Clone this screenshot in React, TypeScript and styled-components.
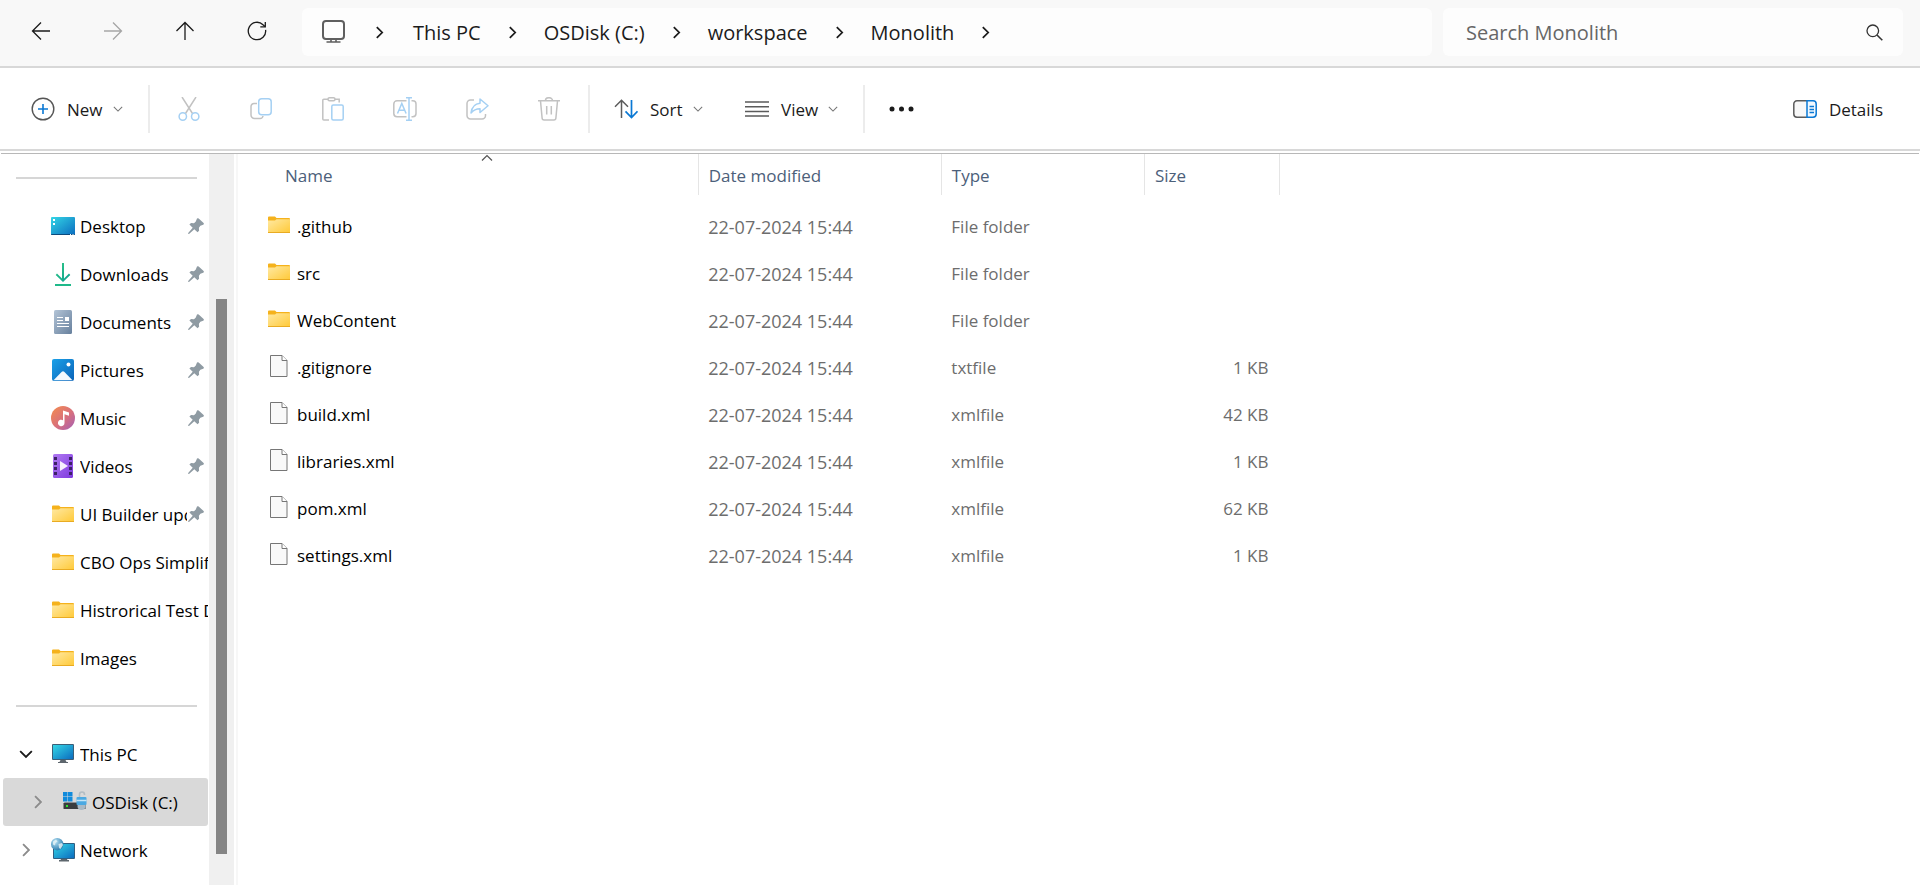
import React from "react";
import styled, { createGlobalStyle } from "styled-components";

const GlobalStyle = createGlobalStyle`
  *, *::before, *::after { box-sizing: border-box; }
  body {
    margin: 0;
    background: #ffffff;
    color: #000000;
    font-family: "Segoe UI", "Open Sans", "Noto Sans", sans-serif;
    font-size: 17px;
    line-height: 24px;
  }
  button, input {
    font: inherit;
    color: inherit;
    background: none;
    border: 0;
    padding: 0;
    margin: 0;
  }
  svg { display: block; flex: none; }
`;

/* ---------- layout ---------- */

const Window = styled.div`
  display: flex;
  flex-direction: column;
  min-height: 100vh;
`;

const AddressRow = styled.header`
  display: flex;
  align-items: center;
  height: 68px;
  padding: 0 17px 4px 5px;
  background: #f8f8f8;
  border-bottom: 2px solid #d8d8d8;
`;

const NavButtons = styled.div`
  display: flex;
  flex: none;
  margin-right: 9px;
`;

const NavButton = styled.button`
  display: flex;
  align-items: center;
  justify-content: center;
  width: 72px;
  height: 48px;
`;

const Breadcrumbs = styled.nav`
  flex: 1;
  display: flex;
  align-items: center;
  min-width: 0;
  height: 48px;
  margin-top: 2px;
  padding-left: 20px;
  overflow: hidden;
  background: #fdfdfd;
  border-radius: 6px;
`;

const Crumb = styled.button`
  padding-top: 2px;
  color: #1b1b1b;
  font-size: 20px;
  line-height: 28px;
  white-space: nowrap;
`;

const CrumbArrow = styled.span<{ $wide?: boolean }>`
  display: flex;
  flex: none;
  align-items: center;
  justify-content: center;
  width: ${(p) => (p.$wide ? 68 : 63)}px;
  padding-top: 1px;
`;

const SearchBox = styled.label`
  display: flex;
  align-items: center;
  flex: 0 1 460px;
  height: 48px;
  margin: 2px 0 0 11px;
  padding: 0 20px 0 23px;
  background: #fdfdfd;
  border-radius: 6px;
`;

const SearchInput = styled.input`
  flex: 1;
  min-width: 0;
  padding-top: 2px;
  font-size: 20px;
  line-height: 28px;
  outline: none;
  &::placeholder { color: #666666; opacity: 1; }
`;

const Toolbar = styled.div`
  display: flex;
  align-items: center;
  height: 83px;
  border-bottom: 2px solid #d8d8d8;
`;

const MenuButton = styled.button<{ $width: number; $indent: number }>`
  display: flex;
  align-items: center;
  gap: 10px;
  width: ${(p) => p.$width}px;
  height: 48px;
  padding-left: ${(p) => p.$indent}px;
  color: #1b1b1b;
`;

const ButtonLabel = styled.span`
  padding: 2px 0 0 2px;
`;

const ToolGroup = styled.div`
  display: flex;
  padding: 0 3px;
`;

const ToolButton = styled.button`
  display: flex;
  align-items: center;
  justify-content: center;
  width: 72px;
  height: 48px;
`;

const Divider = styled.span`
  flex: none;
  width: 2px;
  height: 48px;
  background: #ececec;
`;

const DetailsButton = styled.button`
  display: flex;
  align-items: center;
  gap: 10px;
  height: 48px;
  margin-left: auto;
  margin-right: 37px;
  color: #1b1b1b;
`;

const Body = styled.div`
  display: flex;
  flex: 1;
  margin: 2px 1px 0;
  border-top: 1px solid #b8b8b8;
`;

const Sidebar = styled.nav`
  flex: none;
  width: 208px;
  padding-left: 2px;
`;

const SideRule = styled.hr`
  height: 2px;
  margin: 23px 12px 23px 13px;
  border: 0;
  background: #d6d6d6;
`;

const SideItem = styled.a<{ $selected?: boolean; $nested?: boolean }>`
  display: flex;
  align-items: center;
  height: 48px;
  margin-right: 1px;
  padding-left: ${(p) => (p.$nested ? 25 : 13)}px;
  overflow: hidden;
  color: #000000;
  text-decoration: none;
  border-radius: 3px;
  background: ${(p) => (p.$selected ? "#d9d9d9" : "transparent")};
`;

const Expander = styled.span`
  display: flex;
  flex: none;
  justify-content: center;
  width: 20px;
  margin-right: 15px;
`;

const SideIcon = styled.span`
  display: flex;
  flex: none;
  justify-content: center;
  width: 24px;
  margin-right: 5px;
`;

const SideLabel = styled.span`
  flex: 1;
  min-width: 0;
  padding-top: 2px;
  overflow: hidden;
  white-space: nowrap;
`;

const PinSlot = styled.span`
  flex: none;
  padding: 0 4px 0 1px;
`;

const ScrollTrack = styled.div`
  display: flex;
  flex-direction: column;
  flex: none;
  width: 25px;
  background: #f0f0f0;
`;

const ScrollGap = styled.span<{ $part: number }>`
  flex: ${(p) => p.$part} 1 0;
`;

const ScrollThumb = styled.span`
  flex: 555 1 0;
  width: 11px;
  margin-left: 7px;
  background: #858585;
`;

const Main = styled.main`
  flex: 1;
  min-width: 0;
  margin-left: 2px;
  border-left: 2px solid #f7f7f7;
`;

const FileTable = styled.table`
  table-layout: fixed;
  width: 1042px;
  border-collapse: collapse;
`;

const HeadCell = styled.th<{ $width: number }>`
  width: ${(p) => p.$width}px;
  height: 41px;
  padding: 0;
  border-right: 1px solid #e5e5e5;
  font-weight: 400;
  vertical-align: top;
`;

const SortButton = styled.button<{ $indent: number }>`
  display: flex;
  flex-direction: column;
  width: calc(100% - ${(p) => p.$indent}px);
  height: 41px;
  margin-left: ${(p) => p.$indent}px;
  padding-left: 10px;
  color: #4c607a;
  text-align: left;
`;

const SortMark = styled.span`
  display: flex;
  justify-content: center;
  width: 100%;
  height: 10px;
  padding-right: 9px;
`;

const HeadSpacer = styled.tr`
  height: 8px;
`;

const Cell = styled.td<{ $right?: boolean }>`
  height: 47px;
  padding: 0 11px 0 10px;
  color: #6d6d6d;
  text-align: ${(p) => (p.$right ? "right" : "left")};
  white-space: nowrap;
`;

const NameCell = styled(Cell)`
  padding-left: 30px;
`;

const DateCell = styled(Cell)`
  font-size: 18px;
`;

const FileLink = styled.a`
  display: flex;
  align-items: center;
  gap: 7px;
  color: #000000;
  text-decoration: none;
`;

const FileIconBox = styled.span`
  display: flex;
  justify-content: center;
  width: 22px;
  padding-bottom: 4px;
`;

/* ---------- line icons ---------- */

type ArrowDir = "left" | "right" | "up";

const NavArrow = ({ dir }: { dir: ArrowDir }) => {
  const d = {
    left: "M19 10H1.5M10 1.5L1.5 10l8.500 8.500",
    right: "M1 10h17.500M10 1.500l8.500 8.500L10 18.500",
    up: "M10 19V1.500M1.500 10L10 1.500l8.500 8.500",
  }[dir];
  return (
    <svg width="20" height="20" viewBox="0 0 20 20" fill="none" stroke={dir === "right" ? "#a6a6a6" : "#1b1b1b"} strokeWidth="1.3">
      <path d={d} />
    </svg>
  );
};

const RefreshIcon = () => (
  <svg width="20" height="20" viewBox="0 0 20 20" fill="none" stroke="#1b1b1b" strokeWidth="1.3">
    <path d="M18.600 8.800a8.700 8.700 0 1 1-2.600-5.100L18 5.500" />
    <path d="M18.300 1v4.800h-5" />
  </svg>
);

const Chevron = ({ dir, size = 12, color = "#1b1b1b", weight = 1.6 }: { dir: "right" | "down" | "up"; size?: number; color?: string; weight?: number }) => {
  const d = { right: "M3.500 1l5 5-5 5", down: "M1 3.500l5 5 5-5", up: "M1 6.500l5-5 5 5" }[dir];
  return (
    <svg width={size} height={size} viewBox="0 0 12 12" fill="none" stroke={color} strokeWidth={weight}>
      <path d={d} />
    </svg>
  );
};

const MonitorIcon = () => (
  <svg width="23" height="24" viewBox="0 0 23 24" fill="none" stroke="#5f5f5f" strokeWidth="2">
    <rect x="1" y="1" width="21" height="18" rx="3" />
    <path d="M9 19v3M14 19v3M4.500 22h14" strokeWidth="1.600" />
  </svg>
);

const SearchIcon = () => (
  <svg width="17" height="17" viewBox="0 0 17 17" fill="none" stroke="#333333" strokeWidth="1.3">
    <circle cx="6.800" cy="6.800" r="5.800" />
    <path d="M11 11l5.300 5.300" strokeWidth="1.600" />
  </svg>
);

const NewIcon = () => (
  <svg width="24" height="24" viewBox="0 0 24 24" fill="none">
    <circle cx="12" cy="12" r="10.800" stroke="#555555" strokeWidth="1.400" />
    <path d="M12 7v10M7 12h10" stroke="#0a78d4" strokeWidth="1.600" />
  </svg>
);

const GREY = "#c2c2c2";
const BLUE = "#a5d0f3";

const CutIcon = () => (
  <svg width="22" height="24" viewBox="0 0 22 24" fill="none" strokeWidth="1.500">
    <path d="M4 0l10.500 16.500M18 0L7.500 16.500" stroke={GREY} />
    <circle cx="4.800" cy="19.500" r="3.700" stroke={BLUE} />
    <circle cx="17.200" cy="19.500" r="3.700" stroke={BLUE} />
  </svg>
);

const CopyIcon = () => (
  <svg width="22" height="24" viewBox="0 0 22 24" fill="none" strokeWidth="1.500">
    <path d="M7 6.500H4a3 3 0 0 0-3 3V18a3.500 3.500 0 0 0 3.500 3.500H10a3 3 0 0 0 3-2.500" stroke={GREY} />
    <rect x="8.700" y="1.700" width="12.500" height="16" rx="3" stroke={BLUE} />
  </svg>
);

const PasteIcon = () => (
  <svg width="22" height="24" viewBox="0 0 22 24" fill="none" strokeWidth="1.500">
    <path d="M6 2.200H1.800a1 1 0 0 0-1 1V22a1 1 0 0 0 1 1H7M13 2.200h4.200v3.300" stroke={GREY} />
    <rect x="6" y=".8" width="7" height="3" rx="1.500" stroke={GREY} />
    <rect x="9.800" y="8" width="11.400" height="15" rx="1.500" stroke={BLUE} />
  </svg>
);

const RenameIcon = () => (
  <svg width="24" height="24" viewBox="0 0 24 24" fill="none" strokeWidth="1.500">
    <path d="M13.500 3.800H4a3.200 3.200 0 0 0-3.200 3.200v9.500A3.200 3.200 0 0 0 4 19.700h9.500M18.500 3.800h1.300A3.200 3.200 0 0 1 23 7v9.500a3.200 3.200 0 0 1-3.200 3.200h-1.300" stroke={GREY} />
    <path d="M4.500 16.500L8.800 6.500l4.300 10M6 13.200h5.600M13 .8h6M16 .8v22.400M13 23.200h6" stroke={BLUE} />
  </svg>
);

const ShareIcon = () => (
  <svg width="23" height="22" viewBox="0 0 23 22" fill="none" strokeWidth="1.500" strokeLinejoin="round">
    <path d="M8 2H4.500A3.500 3.500 0 0 0 1 5.500v12A3.500 3.500 0 0 0 4.500 21H16a3.500 3.500 0 0 0 3.500-3.500V16" stroke={GREY} />
    <path d="M14 1l8 6.800-8 6.700v-3.800c-4 0-6.500 1.200-9 4.300.8-5.600 3.800-9.200 9-9.700z" stroke={BLUE} />
  </svg>
);

const TrashIcon = () => (
  <svg width="22" height="24" viewBox="0 0 22 24" fill="none" stroke={GREY} strokeWidth="1.500">
    <path d="M0 3.800h22M7.500 3.500a3.500 2.800 0 0 1 7 0M2.500 4l1.600 17a2 2 0 0 0 2 1.900h9.800a2 2 0 0 0 2-1.900L19.500 4M8.700 9v8.500M13.300 9v8.500" />
  </svg>
);

const SortIcon = () => (
  <svg width="24" height="20" viewBox="0 0 24 20" fill="none" strokeWidth="1.500">
    <path d="M7.500 19V1.500M1 7.800l6.500-6.500L14 7.800" stroke="#5b5b5b" />
    <path d="M17.500 1v17.500M11.500 12.300l6 6.200 6-6.200" stroke="#0a78d4" strokeWidth="1.700" />
  </svg>
);

const ViewIcon = () => (
  <svg width="24" height="18" viewBox="0 0 24 18" stroke="#5b5b5b" strokeWidth="1.500">
    <path d="M0 2h24M0 6.700h24M0 11.400h24M0 16.100h24" />
  </svg>
);

const DotsIcon = () => (
  <svg width="25" height="6" viewBox="0 0 25 6" fill="#1b1b1b">
    <circle cx="3" cy="3" r="2.500" />
    <circle cx="12.500" cy="3" r="2.500" />
    <circle cx="22" cy="3" r="2.500" />
  </svg>
);

const DetailsIcon = () => (
  <svg width="24" height="18" viewBox="0 0 24 18" fill="none" strokeWidth="1.500">
    <path d="M14 .8H4A3.200 3.200 0 0 0 .8 4v10A3.200 3.200 0 0 0 4 17.200h10" stroke="#5b5b5b" fill="#f8f8f8" />
    <path d="M14 .8h6A3.200 3.200 0 0 1 23.200 4v10a3.200 3.200 0 0 1-3.200 3.200h-6z" stroke="#0a78d4" fill="#f0f8ff" />
    <path d="M16.500 6.500h4.500M16.500 9.500h4.500M16.500 12.500h4.500" stroke="#0a78d4" />
  </svg>
);

/* ---------- colour icons ---------- */

const GradientSheet = styled.svg`
  position: absolute;
`;

const Gradients = () => (
  <GradientSheet width="0" height="0" aria-hidden="true">
    <defs>
      <linearGradient id="screen" x1="0" y1="0" x2="1" y2="1">
        <stop offset="0" stopColor="#34d6e6" />
        <stop offset="1" stopColor="#0b6cbf" />
      </linearGradient>
      <linearGradient id="folder" x1="0" y1="0" x2="1" y2="1">
        <stop offset="0" stopColor="#ffe9a3" />
        <stop offset="1" stopColor="#ffc937" />
      </linearGradient>
      <linearGradient id="download" x1="0" y1="0" x2="1" y2="1">
        <stop offset="0" stopColor="#31c884" />
        <stop offset="1" stopColor="#0ba093" />
      </linearGradient>
      <linearGradient id="paper" x1="0" y1="0" x2="1" y2="1">
        <stop offset="0" stopColor="#b3c4d6" />
        <stop offset="1" stopColor="#67809d" />
      </linearGradient>
      <linearGradient id="photo" x1="0" y1="0" x2="1" y2="1">
        <stop offset="0" stopColor="#1ba1e8" />
        <stop offset="1" stopColor="#0a63b8" />
      </linearGradient>
      <linearGradient id="music" x1="0" y1="0" x2="1" y2="1">
        <stop offset="0" stopColor="#f58d4c" />
        <stop offset=".55" stopColor="#d8707d" />
        <stop offset="1" stopColor="#a35fb8" />
      </linearGradient>
      <linearGradient id="film" x1="0" y1="0" x2="1" y2="1">
        <stop offset="0" stopColor="#b07af2" />
        <stop offset="1" stopColor="#7f39df" />
      </linearGradient>
      <radialGradient id="globe" cx=".35" cy=".3" r=".8">
        <stop offset="0" stopColor="#b7e2f5" />
        <stop offset="1" stopColor="#1f73a8" />
      </radialGradient>
    </defs>
  </GradientSheet>
);

const FolderIcon = () => (
  <svg width="22" height="18" viewBox="0 0 22 18">
    <path d="M0 1.500Q0 .5 1 .5h6l1.500 1.500H21a1 1 0 0 1 1 1V8H0z" fill="#f5b21c" />
    <path d="M0 4.500h7l1.500-1.300H22V16a1 1 0 0 1-1 1H1a1 1 0 0 1-1-1z" fill="url(#folder)" />
    <path d="M0 16.500h22" stroke="#e9ab22" />
  </svg>
);

const FileIcon = () => (
  <svg width="18" height="22" viewBox="0 0 18 22" fill="#f9f9f9" stroke="#767676">
    <path d="M.5.5h11.500l5 5v16H.5z" />
    <path d="M12 .5v5h5" fill="#ffffff" />
  </svg>
);

const DesktopIcon = () => (
  <svg width="24" height="18" viewBox="0 0 24 18">
    <rect width="24" height="18" rx="1" fill="url(#screen)" />
    <path d="M0 17h24v0a1 1 0 0 1-1 1H1a1 1 0 0 1-1-1z" fill="#0c4a7c" />
    <path d="M2 2h2v2H2zM2 6h2v2H2zM19 17h1v1h-1zM21.500 17h1v1h-1z" fill="#ffffff" />
  </svg>
);

const DownloadIcon = () => (
  <svg width="16" height="24" viewBox="0 0 16 24">
    <path d="M7 1h2v15.500l5-5 1.300 1.400L8 20 .7 12.900 2 11.500l5 5z" fill="url(#download)" />
    <path d="M0 22h16v2H0z" fill="#1fb98a" />
  </svg>
);

const DocumentIcon = () => (
  <svg width="18" height="24" viewBox="0 0 18 24">
    <rect width="18" height="24" rx="1.500" fill="url(#paper)" />
    <path d="M3 7h6v1H3zM3 10h6v1H3zM3 13h12v1H3zM3 16h12v1H3zM11 7h4v4h-4z" fill="#ffffff" />
  </svg>
);

const PictureIcon = () => (
  <svg width="22" height="22" viewBox="0 0 22 22">
    <rect width="22" height="22" rx="2" fill="url(#photo)" />
    <path d="M1.500 21.200l8.300-8.400a1.700 1.700 0 0 1 2.400 0l8.300 8.400z" fill="#f2f8fd" />
    <circle cx="16.500" cy="5.500" r="2" fill="#ffffff" />
  </svg>
);

const MusicIcon = () => (
  <svg width="24" height="24" viewBox="0 0 24 24">
    <circle cx="12" cy="12" r="12" fill="url(#music)" />
    <path d="M12 4.500l6 2v3.200l-4.500-1.500V17a3.300 3.300 0 1 1-1.500-2.800z" fill="#ffffff" />
  </svg>
);

const VideoIcon = () => (
  <svg width="20" height="24" viewBox="0 0 20 24">
    <rect width="20" height="24" rx="1.500" fill="url(#film)" />
    <path d="M1 3h3v3H1zM1 8h3v3H1zM1 13h3v3H1zM1 18h3v3H1zM16 3h3v3h-3zM16 8h3v3h-3zM16 13h3v3h-3zM16 18h3v3h-3z" fill="#3c2167" />
    <path d="M7 7l8 5-8 5z" fill="#f6f0fd" />
  </svg>
);

const ThisPcIcon = () => (
  <svg width="22" height="20" viewBox="0 0 22 20">
    <path d="M8.500 16h5l1 2h1.500v1H6v-1h1.500z" fill="#5d666d" />
    <rect width="22" height="16" rx="1" fill="#3b5f78" />
    <rect x="1" y="1" width="20" height="14" fill="url(#screen)" />
  </svg>
);

const DriveIcon = () => (
  <svg width="24" height="22" viewBox="0 0 24 22">
    <path d="M0 1h4.500v4.500H0zM5 1h4.500v4.500H5zM0 6h4.500v4.500H0zM5 6h4.500v4.500H5z" fill="#118bdc" />
    <path d="M1.500 11H22l1 2H.5z" fill="#8d9195" />
    <rect x=".5" y="12" width="22" height="6" rx=".6" fill="#393d40" />
    <rect x="3" y="14" width="2" height="2" fill="#2ee62e" />
    <path d="M16.500 6V3.500a2.500 2.500 0 0 1 5 0V4" fill="none" stroke="#b3bdc4" strokeWidth="1.600" />
    <circle cx="18.500" cy="15" r="4" fill="#a9b9c5" />
    <rect x="13.500" y="6" width="10" height="8" rx="1" fill="#4ba9e2" />
    <path d="M13.500 9.500h10" stroke="#c4e5f8" strokeWidth="1.500" />
  </svg>
);

const NetworkIcon = () => (
  <svg width="24" height="24" viewBox="0 0 24 24">
    <path d="M10.500 20h5l1 2H18v1.500H8V22h1.500z" fill="#5d666d" />
    <rect x="2" y="5" width="22" height="16" rx="1" fill="#2f5f82" />
    <rect x="3" y="6" width="20" height="14" fill="url(#screen)" />
    <circle cx="6.200" cy="6.200" r="6.200" fill="url(#globe)" />
    <path d="M2 3.500l3-2 1.500 2-2 1.500-.5 2.500-2-1zM7.500 6l3.500-1 1 2-2.500 4-1.500-1z" fill="#e8f4f6" opacity=".8" />
  </svg>
);

const PinIcon = () => (
  <svg width="16" height="16" viewBox="0 0 16 16" fill="#8f9ba3">
    <path d="M9 .5q.8-.7 1.700 0l4.900 4.600q.8 1-.4 1.700l-2.800 1-1.500 2 .2 3-1.600 1.500-3.200-3.100L1.300 15.700 0 16l.4-1.300 4.300-4.900-3.300-3.200L3 5l3 .2L7.800 3.500z" />
  </svg>
);

/* ---------- data ---------- */

const crumbs = ["This PC", "OSDisk (C:)", "workspace", "Monolith"];

const tools = [
  { name: "Cut", Icon: CutIcon },
  { name: "Copy", Icon: CopyIcon },
  { name: "Paste", Icon: PasteIcon },
  { name: "Rename", Icon: RenameIcon },
  { name: "Share", Icon: ShareIcon },
  { name: "Delete", Icon: TrashIcon },
];

const quickAccess = [
  { name: "Desktop", Icon: DesktopIcon, pinned: true },
  { name: "Downloads", Icon: DownloadIcon, pinned: true },
  { name: "Documents", Icon: DocumentIcon, pinned: true },
  { name: "Pictures", Icon: PictureIcon, pinned: true },
  { name: "Music", Icon: MusicIcon, pinned: true },
  { name: "Videos", Icon: VideoIcon, pinned: true },
  { name: "UI Builder upd", Icon: FolderIcon, pinned: true },
  { name: "CBO Ops Simplif", Icon: FolderIcon, pinned: false },
  { name: "Histrorical Test D", Icon: FolderIcon, pinned: false },
  { name: "Images", Icon: FolderIcon, pinned: false },
];

const modified = "22-07-2024 15:44";

const files = [
  { name: ".github", type: "File folder", size: "" },
  { name: "src", type: "File folder", size: "" },
  { name: "WebContent", type: "File folder", size: "" },
  { name: ".gitignore", type: "txtfile", size: "1 KB" },
  { name: "build.xml", type: "xmlfile", size: "42 KB" },
  { name: "libraries.xml", type: "xmlfile", size: "1 KB" },
  { name: "pom.xml", type: "xmlfile", size: "62 KB" },
  { name: "settings.xml", type: "xmlfile", size: "1 KB" },
];

const columns = [
  { name: "Name", width: 460, indent: 37 },
  { name: "Date modified", width: 243, indent: 0 },
  { name: "Type", width: 203, indent: 0 },
  { name: "Size", width: 135, indent: 0 },
];

/* ---------- page ---------- */

export default function App() {
  return (
    <Window>
      <GlobalStyle />
      <Gradients />
      <AddressRow>
        <NavButtons>
          <NavButton aria-label="Back"><NavArrow dir="left" /></NavButton>
          <NavButton aria-label="Forward"><NavArrow dir="right" /></NavButton>
          <NavButton aria-label="Up"><NavArrow dir="up" /></NavButton>
          <NavButton aria-label="Refresh"><RefreshIcon /></NavButton>
        </NavButtons>
        <Breadcrumbs aria-label="Address">
          <MonitorIcon />
          {crumbs.map((crumb, i) => (
            <React.Fragment key={crumb}>
              <CrumbArrow $wide={i === 0}><Chevron dir="right" size={13} /></CrumbArrow>
              <Crumb>{crumb}</Crumb>
            </React.Fragment>
          ))}
          <CrumbArrow><Chevron dir="right" size={13} /></CrumbArrow>
        </Breadcrumbs>
        <SearchBox>
          <SearchInput type="text" placeholder="Search Monolith" aria-label="Search Monolith" />
          <SearchIcon />
        </SearchBox>
      </AddressRow>

      <Toolbar>
        <MenuButton $width={148} $indent={31}>
          <NewIcon />
          <ButtonLabel>New</ButtonLabel>
          <Chevron dir="down" size={10} color="#777777" weight={1.3} />
        </MenuButton>
        <Divider />
        <ToolGroup>
          {tools.map(({ name, Icon }) => (
            <ToolButton key={name} aria-label={name}><Icon /></ToolButton>
          ))}
        </ToolGroup>
        <Divider />
        <MenuButton $width={131} $indent={24}>
          <SortIcon />
          <ButtonLabel>Sort</ButtonLabel>
          <Chevron dir="down" size={10} color="#777777" weight={1.3} />
        </MenuButton>
        <MenuButton $width={142} $indent={24}>
          <ViewIcon />
          <ButtonLabel>View</ButtonLabel>
          <Chevron dir="down" size={10} color="#777777" weight={1.3} />
        </MenuButton>
        <Divider />
        <ToolButton aria-label="See more"><DotsIcon /></ToolButton>
        <DetailsButton>
          <DetailsIcon />
          <ButtonLabel>Details</ButtonLabel>
        </DetailsButton>
      </Toolbar>

      <Body>
        <Sidebar aria-label="Folders">
          <SideRule />
          {quickAccess.map(({ name, Icon, pinned }) => (
            <SideItem key={name} href="#">
              <Expander />
              <SideIcon><Icon /></SideIcon>
              <SideLabel>{name}</SideLabel>
              {pinned && <PinSlot><PinIcon /></PinSlot>}
            </SideItem>
          ))}
          <SideRule />
          <SideItem href="#">
            <Expander><Chevron dir="down" size={14} /></Expander>
            <SideIcon><ThisPcIcon /></SideIcon>
            <SideLabel>This PC</SideLabel>
          </SideItem>
          <SideItem href="#" $selected $nested>
            <Expander><Chevron dir="right" size={14} color="#8c8c8c" /></Expander>
            <SideIcon><DriveIcon /></SideIcon>
            <SideLabel>OSDisk (C:)</SideLabel>
          </SideItem>
          <SideItem href="#">
            <Expander><Chevron dir="right" size={14} color="#8c8c8c" /></Expander>
            <SideIcon><NetworkIcon /></SideIcon>
            <SideLabel>Network</SideLabel>
          </SideItem>
        </Sidebar>
        <ScrollTrack>
          <ScrollGap $part={145} />
          <ScrollThumb />
          <ScrollGap $part={31} />
        </ScrollTrack>

        <Main>
          <FileTable>
            <thead>
              <tr>
                {columns.map(({ name, width, indent }) => (
                  <HeadCell key={name} $width={width} scope="col">
                    <SortButton $indent={indent}>
                      <SortMark>
                        {name === "Name" && <Chevron dir="up" size={12} color="#555555" weight={1.2} />}
                      </SortMark>
                      {name}
                    </SortButton>
                  </HeadCell>
                ))}
              </tr>
            </thead>
            <tbody>
              <HeadSpacer aria-hidden="true" />
              {files.map(({ name, type, size }) => (
                <tr key={name}>
                  <NameCell>
                    <FileLink href="#">
                      <FileIconBox>{type === "File folder" ? <FolderIcon /> : <FileIcon />}</FileIconBox>
                      {name}
                    </FileLink>
                  </NameCell>
                  <DateCell>{modified}</DateCell>
                  <Cell>{type}</Cell>
                  <Cell $right>{size}</Cell>
                </tr>
              ))}
            </tbody>
          </FileTable>
        </Main>
      </Body>
    </Window>
  );
}
